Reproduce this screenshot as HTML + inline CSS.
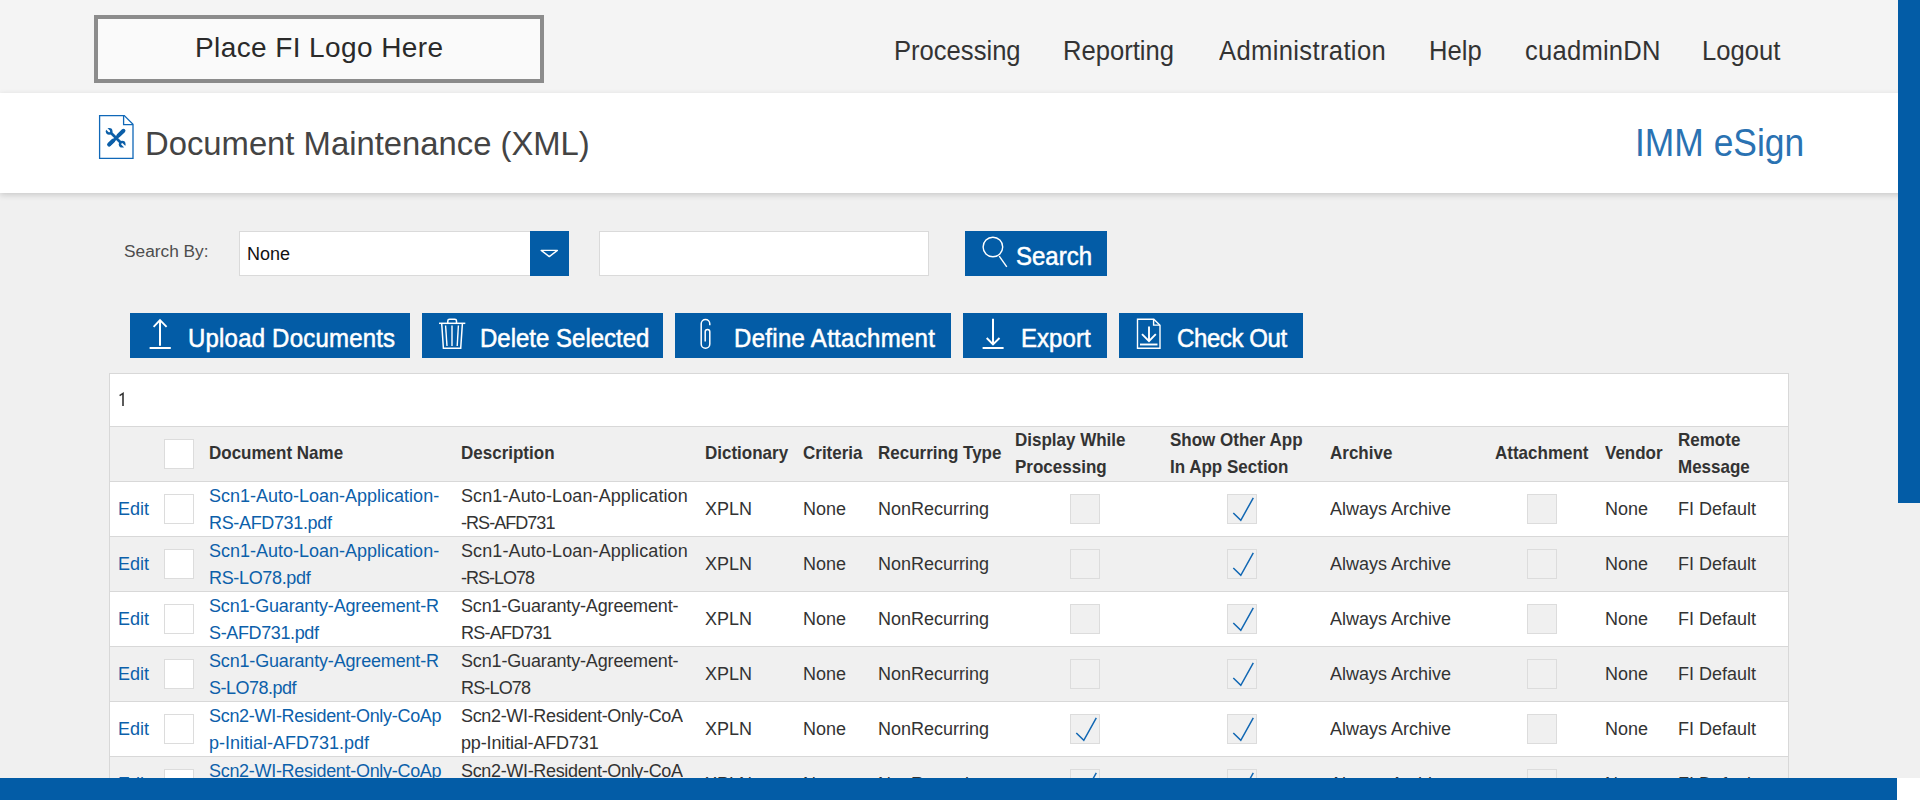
<!DOCTYPE html>
<html><head><meta charset="utf-8"><title>Document Maintenance (XML)</title>
<style>
html,body{margin:0;padding:0;}
body{width:1920px;height:800px;overflow:hidden;position:relative;background:#f0f0f0;font-family:"Liberation Sans",sans-serif;}
.t{position:absolute;white-space:nowrap;}
.b{position:absolute;box-sizing:border-box;}
</style></head><body>
<div class="b" style="left:0;top:0;width:1920px;height:93px;background:#f4f4f4"></div>
<div class="b" style="left:0;top:93px;width:1920px;height:100px;background:#fff;box-shadow:0 2px 6px rgba(0,0,0,0.16)"></div>
<div class="b" style="left:94px;top:15px;width:450px;height:68px;border:4px solid #8c8c8c;background:#fafafa"></div>
<div class="t" style="left:195px;top:33.90px;font-size:28px;line-height:28px;font-weight:400;color:#2a2a2a;letter-spacing:0.4px;">Place FI Logo Here</div>
<div class="t" style="left:894px;top:38.63px;font-size:25.6px;line-height:25.6px;font-weight:400;color:#333;transform:scaleY(1.08);transform-origin:0 21.67px;letter-spacing:0px;">Processing</div>
<div class="t" style="left:1063px;top:38.63px;font-size:25.6px;line-height:25.6px;font-weight:400;color:#333;transform:scaleY(1.08);transform-origin:0 21.67px;letter-spacing:0px;">Reporting</div>
<div class="t" style="left:1219px;top:38.63px;font-size:25.6px;line-height:25.6px;font-weight:400;color:#333;transform:scaleY(1.08);transform-origin:0 21.67px;letter-spacing:0.35px;">Administration</div>
<div class="t" style="left:1429px;top:38.63px;font-size:25.6px;line-height:25.6px;font-weight:400;color:#333;transform:scaleY(1.08);transform-origin:0 21.67px;letter-spacing:0px;">Help</div>
<div class="t" style="left:1525px;top:38.63px;font-size:25.6px;line-height:25.6px;font-weight:400;color:#333;transform:scaleY(1.08);transform-origin:0 21.67px;letter-spacing:0.22px;">cuadminDN</div>
<div class="t" style="left:1702px;top:38.63px;font-size:25.6px;line-height:25.6px;font-weight:400;color:#333;transform:scaleY(1.08);transform-origin:0 21.67px;letter-spacing:0px;">Logout</div>
<svg class="b" style="left:95px;top:110px" width="45" height="52" viewBox="0 0 45 52">
<path d="M4.6 5.6 H29.3 L38 14.3 V48.4 H4.6 Z" fill="#fff" stroke="#1068b8" stroke-width="1.3"/>
<path d="M28.6 5.6 V14.6 H38" fill="none" stroke="#1068b8" stroke-width="1.3"/>
<g transform="translate(21.2 28) scale(0.84) translate(-21.2 -28)">
<g stroke="#0b5ea8" stroke-linecap="round" fill="none">
<path d="M13 36 L29.5 19.8" stroke-width="3.2"/>
<path d="M23.8 25.2 L29.8 19.4" stroke-width="4.8"/>
<path d="M12.8 35.8 L17.8 31" stroke-width="4.8"/>
<path d="M14.5 21.5 L27 34" stroke-width="3.2"/>
</g>
<circle cx="12.8" cy="20" r="4" fill="#0b5ea8"/><circle cx="28.3" cy="35.3" r="4" fill="#0b5ea8"/>
<path d="M9.8 17 L12.8 20" stroke="#fff" stroke-width="2.4" stroke-linecap="round"/>
<path d="M31.3 38.3 L28.3 35.3" stroke="#fff" stroke-width="2.4" stroke-linecap="round"/>
</g>
</svg>
<div class="t" style="left:145px;top:128.03px;font-size:32.8px;line-height:32.8px;font-weight:400;color:#444;transform:scaleY(1.04);transform-origin:0 27.77px;">Document Maintenance (XML)</div>
<div class="t" style="left:1635px;top:127.03px;font-size:35.4px;line-height:35.4px;font-weight:400;color:#2a72b2;transform:scaleY(1.08);transform-origin:0 29.97px;">IMM eSign</div>
<div class="t" style="left:124px;top:243.26px;font-size:17.3px;line-height:17.3px;font-weight:400;color:#4d4d4d;">Search By:</div>
<div class="b" style="left:239px;top:231px;width:330px;height:45px;border:1px solid #dadada;background:#fff"></div>
<div class="t" style="left:247px;top:244.76px;font-size:18px;line-height:18px;font-weight:400;color:#111;">None</div>
<div class="b" style="left:530px;top:231px;width:39px;height:45px;background:#035ca6"></div>
<svg class="b" style="left:530px;top:231px" width="39" height="45"><path d="M11.2 19.4 H27.4 L19.3 25.6 Z" fill="none" stroke="#fff" stroke-width="1.4" stroke-linejoin="round"/></svg>
<div class="b" style="left:599px;top:231px;width:330px;height:45px;border:1px solid #dadada;background:#fff"></div>
<div class="b" style="left:965px;top:231px;width:142px;height:45px;background:#035ca6"></div>
<svg class="b" style="left:965px;top:231px" width="142" height="45"><circle cx="27.9" cy="16" r="9.8" fill="none" stroke="#fff" stroke-width="1.4"/><path d="M34.2 25.1 L41.8 35.8" stroke="#fff" stroke-width="1.4"/></svg>
<div class="t" style="left:1016px;top:244.68px;font-size:24px;line-height:24px;font-weight:400;color:#fff;transform:scaleY(1.04);transform-origin:0 20.32px;-webkit-text-stroke:0.5px #fff;">Search</div>
<div class="b" style="left:130px;top:313px;width:280px;height:45px;background:#035ca6"></div>
<div class="t" style="left:188px;top:326.68px;font-size:24px;line-height:24px;font-weight:400;color:#fff;transform:scaleY(1.05);transform-origin:0 20.32px;-webkit-text-stroke:0.5px #fff;letter-spacing:0.2px;">Upload Documents</div>
<div class="b" style="left:422px;top:313px;width:241px;height:45px;background:#035ca6"></div>
<div class="t" style="left:480px;top:326.68px;font-size:24px;line-height:24px;font-weight:400;color:#fff;transform:scaleY(1.05);transform-origin:0 20.32px;-webkit-text-stroke:0.5px #fff;letter-spacing:0.0px;">Delete Selected</div>
<div class="b" style="left:675px;top:313px;width:276px;height:45px;background:#035ca6"></div>
<div class="t" style="left:734px;top:326.68px;font-size:24px;line-height:24px;font-weight:400;color:#fff;transform:scaleY(1.05);transform-origin:0 20.32px;-webkit-text-stroke:0.5px #fff;letter-spacing:0.3px;">Define Attachment</div>
<div class="b" style="left:963px;top:313px;width:144px;height:45px;background:#035ca6"></div>
<div class="t" style="left:1021px;top:326.68px;font-size:24px;line-height:24px;font-weight:400;color:#fff;transform:scaleY(1.05);transform-origin:0 20.32px;-webkit-text-stroke:0.5px #fff;letter-spacing:0.05px;">Export</div>
<div class="b" style="left:1119px;top:313px;width:184px;height:45px;background:#035ca6"></div>
<div class="t" style="left:1177px;top:326.68px;font-size:24px;line-height:24px;font-weight:400;color:#fff;transform:scaleY(1.05);transform-origin:0 20.32px;-webkit-text-stroke:0.5px #fff;letter-spacing:-0.4px;">Check Out</div>
<svg class="b" style="left:0;top:0" width="1320" height="370" fill="none" stroke="#fff" stroke-width="1.5">
<path d="M160 320.5 V345.8" stroke-width="2"/><path d="M153.6 326.8 L160 320.2 L166.6 326.8" stroke-width="1.9"/><path d="M149.6 348 H170.8" stroke-width="2"/>
<path d="M439 323.3 H465.3"/><path d="M447.8 323.3 V321 Q447.8 319.3 449.5 319.3 H454.8 Q456.5 319.3 456.5 321 V323.3"/>
<path d="M441.7 323.5 L443.4 348.3 H460.7 L462.4 323.5"/>
<path d="M445.6 325.5 L447 346" stroke-width="1.4"/><path d="M452 325.5 V346" stroke-width="1.4"/><path d="M458.4 325.5 L457.2 346" stroke-width="1.4"/>
<path d="M709.8 325.2 V323.8 A4.3 4.3 0 0 0 701.2 323.8 V344 A4.3 4.3 0 0 0 709.8 344 V331.8 A2.3 2.3 0 0 0 705.2 331.8 V341.6"/>
<path d="M993 318.8 V344" stroke-width="2"/><path d="M986.7 338 L993 344.4 L999.5 338" stroke-width="1.9"/><path d="M982.6 348 H1003.6" stroke-width="2"/>
<path d="M1137.5 319.3 H1153.8 L1160 325.3 V348.2 H1137.5 Z" stroke-width="1.4"/><path d="M1153.6 319.5 V325.1 H1160" stroke-width="1.4"/>
<path d="M1149 326.4 V341" stroke-width="1.9"/><path d="M1142 334.2 L1149 341.2 L1155.8 334.2" stroke-width="1.9"/><path d="M1140 344.5 H1157.5" stroke-width="1.9"/>
</svg>
<div class="b" style="left:109px;top:373px;width:1680px;height:420px;border:1px solid #d8d8d8;border-bottom:none;background:#fff"></div>
<svg class="b" style="left:110px;top:385px" width="30" height="30"><path d="M9.6 10.6 L13 8.4 V21" fill="none" stroke="#333" stroke-width="1.6"/></svg>
<div class="b" style="left:109px;top:426px;width:1680px;height:56px;border:1px solid #d8d8d8;border-bottom:1px solid #d8d8d8;background:#f0f0f0"></div>
<div class="b" style="left:164px;top:439px;width:30px;height:30px;border:1px solid #dcdcdc;background:#fff"></div>
<div class="t" style="left:209px;top:444.81px;font-size:17px;line-height:17px;font-weight:700;color:#333333;transform:scaleY(1.07);transform-origin:0 14.39px;">Document Name</div>
<div class="t" style="left:461px;top:444.81px;font-size:17px;line-height:17px;font-weight:700;color:#333333;transform:scaleY(1.07);transform-origin:0 14.39px;">Description</div>
<div class="t" style="left:705px;top:444.81px;font-size:17px;line-height:17px;font-weight:700;color:#333333;transform:scaleY(1.07);transform-origin:0 14.39px;">Dictionary</div>
<div class="t" style="left:803px;top:444.81px;font-size:17px;line-height:17px;font-weight:700;color:#333333;transform:scaleY(1.07);transform-origin:0 14.39px;">Criteria</div>
<div class="t" style="left:878px;top:444.81px;font-size:17px;line-height:17px;font-weight:700;color:#333333;transform:scaleY(1.07);transform-origin:0 14.39px;">Recurring Type</div>
<div class="t" style="left:1330px;top:444.81px;font-size:17px;line-height:17px;font-weight:700;color:#333333;transform:scaleY(1.07);transform-origin:0 14.39px;">Archive</div>
<div class="t" style="left:1495px;top:444.81px;font-size:17px;line-height:17px;font-weight:700;color:#333333;transform:scaleY(1.07);transform-origin:0 14.39px;">Attachment</div>
<div class="t" style="left:1605px;top:444.81px;font-size:17px;line-height:17px;font-weight:700;color:#333333;transform:scaleY(1.07);transform-origin:0 14.39px;">Vendor</div>
<div class="t" style="left:1015px;top:432.21px;font-size:17px;line-height:17px;font-weight:700;color:#333333;transform:scaleY(1.07);transform-origin:0 14.39px;">Display While</div>
<div class="t" style="left:1015px;top:459.31px;font-size:17px;line-height:17px;font-weight:700;color:#333333;transform:scaleY(1.07);transform-origin:0 14.39px;">Processing</div>
<div class="t" style="left:1170px;top:432.21px;font-size:17px;line-height:17px;font-weight:700;color:#333333;transform:scaleY(1.07);transform-origin:0 14.39px;">Show Other App</div>
<div class="t" style="left:1170px;top:459.31px;font-size:17px;line-height:17px;font-weight:700;color:#333333;transform:scaleY(1.07);transform-origin:0 14.39px;">In App Section</div>
<div class="t" style="left:1678px;top:432.21px;font-size:17px;line-height:17px;font-weight:700;color:#333333;transform:scaleY(1.07);transform-origin:0 14.39px;">Remote</div>
<div class="t" style="left:1678px;top:459.31px;font-size:17px;line-height:17px;font-weight:700;color:#333333;transform:scaleY(1.07);transform-origin:0 14.39px;">Message</div>
<div class="b" style="left:109px;top:481px;width:1680px;height:56px;border:1px solid #d8d8d8;border-top:1px solid #d8d8d8;background:#fff"></div>
<div class="t" style="left:118px;top:499.76px;font-size:18px;line-height:18px;font-weight:400;color:#0c60aa;transform:scaleY(1.04);transform-origin:0 15.24px;">Edit</div>
<div class="b" style="left:164px;top:494px;width:30px;height:30px;border:1px solid #dcdcdc;background:#fff"></div>
<div class="t" style="left:209px;top:486.56px;font-size:18px;line-height:18px;font-weight:400;color:#0c60aa;transform:scaleY(1.04);transform-origin:0 15.24px;">Scn1-Auto-Loan-Application-</div>
<div class="t" style="left:209px;top:513.76px;font-size:18px;line-height:18px;font-weight:400;color:#0c60aa;transform:scaleY(1.04);transform-origin:0 15.24px;letter-spacing:-0.342px;">RS-AFD731.pdf</div>
<div class="t" style="left:461px;top:486.56px;font-size:18px;line-height:18px;font-weight:400;color:#333333;transform:scaleY(1.04);transform-origin:0 15.24px;letter-spacing:0.104px;">Scn1-Auto-Loan-Application</div>
<div class="t" style="left:461px;top:513.76px;font-size:18px;line-height:18px;font-weight:400;color:#333333;transform:scaleY(1.04);transform-origin:0 15.24px;letter-spacing:-0.956px;">-RS-AFD731</div>
<div class="t" style="left:705px;top:499.76px;font-size:18px;line-height:18px;font-weight:400;color:#333333;transform:scaleY(1.04);transform-origin:0 15.24px;">XPLN</div>
<div class="t" style="left:803px;top:499.76px;font-size:18px;line-height:18px;font-weight:400;color:#333333;transform:scaleY(1.04);transform-origin:0 15.24px;">None</div>
<div class="t" style="left:878px;top:499.76px;font-size:18px;line-height:18px;font-weight:400;color:#333333;transform:scaleY(1.04);transform-origin:0 15.24px;">NonRecurring</div>
<div class="b" style="left:1070px;top:494px;width:30px;height:30px;border:1px solid #dcdcdc;background:#f0f0f0"></div>
<div class="b" style="left:1227px;top:494px;width:30px;height:30px;border:1px solid #dcdcdc;background:#f0f0f0"></div>
<svg class="b" style="left:1227px;top:494px" width="30" height="30"><path d="M6.3 19 L13.8 26.3 L26.3 3.8" fill="none" stroke="#1167b3" stroke-width="1.5"/></svg>
<div class="t" style="left:1330px;top:499.76px;font-size:18px;line-height:18px;font-weight:400;color:#333333;transform:scaleY(1.04);transform-origin:0 15.24px;">Always Archive</div>
<div class="b" style="left:1527px;top:494px;width:30px;height:30px;border:1px solid #dcdcdc;background:#f0f0f0"></div>
<div class="t" style="left:1605px;top:499.76px;font-size:18px;line-height:18px;font-weight:400;color:#333333;transform:scaleY(1.04);transform-origin:0 15.24px;">None</div>
<div class="t" style="left:1678px;top:499.76px;font-size:18px;line-height:18px;font-weight:400;color:#333333;transform:scaleY(1.04);transform-origin:0 15.24px;">FI Default</div>
<div class="b" style="left:109px;top:536px;width:1680px;height:56px;border:1px solid #d8d8d8;border-top:1px solid #d8d8d8;background:#f0f0f0"></div>
<div class="t" style="left:118px;top:554.76px;font-size:18px;line-height:18px;font-weight:400;color:#0c60aa;transform:scaleY(1.04);transform-origin:0 15.24px;">Edit</div>
<div class="b" style="left:164px;top:549px;width:30px;height:30px;border:1px solid #dcdcdc;background:#fff"></div>
<div class="t" style="left:209px;top:541.56px;font-size:18px;line-height:18px;font-weight:400;color:#0c60aa;transform:scaleY(1.04);transform-origin:0 15.24px;">Scn1-Auto-Loan-Application-</div>
<div class="t" style="left:209px;top:568.76px;font-size:18px;line-height:18px;font-weight:400;color:#0c60aa;transform:scaleY(1.04);transform-origin:0 15.24px;letter-spacing:-0.340px;">RS-LO78.pdf</div>
<div class="t" style="left:461px;top:541.56px;font-size:18px;line-height:18px;font-weight:400;color:#333333;transform:scaleY(1.04);transform-origin:0 15.24px;letter-spacing:0.104px;">Scn1-Auto-Loan-Application</div>
<div class="t" style="left:461px;top:568.76px;font-size:18px;line-height:18px;font-weight:400;color:#333333;transform:scaleY(1.04);transform-origin:0 15.24px;letter-spacing:-1.000px;">-RS-LO78</div>
<div class="t" style="left:705px;top:554.76px;font-size:18px;line-height:18px;font-weight:400;color:#333333;transform:scaleY(1.04);transform-origin:0 15.24px;">XPLN</div>
<div class="t" style="left:803px;top:554.76px;font-size:18px;line-height:18px;font-weight:400;color:#333333;transform:scaleY(1.04);transform-origin:0 15.24px;">None</div>
<div class="t" style="left:878px;top:554.76px;font-size:18px;line-height:18px;font-weight:400;color:#333333;transform:scaleY(1.04);transform-origin:0 15.24px;">NonRecurring</div>
<div class="b" style="left:1070px;top:549px;width:30px;height:30px;border:1px solid #dcdcdc;background:#f0f0f0"></div>
<div class="b" style="left:1227px;top:549px;width:30px;height:30px;border:1px solid #dcdcdc;background:#f0f0f0"></div>
<svg class="b" style="left:1227px;top:549px" width="30" height="30"><path d="M6.3 19 L13.8 26.3 L26.3 3.8" fill="none" stroke="#1167b3" stroke-width="1.5"/></svg>
<div class="t" style="left:1330px;top:554.76px;font-size:18px;line-height:18px;font-weight:400;color:#333333;transform:scaleY(1.04);transform-origin:0 15.24px;">Always Archive</div>
<div class="b" style="left:1527px;top:549px;width:30px;height:30px;border:1px solid #dcdcdc;background:#f0f0f0"></div>
<div class="t" style="left:1605px;top:554.76px;font-size:18px;line-height:18px;font-weight:400;color:#333333;transform:scaleY(1.04);transform-origin:0 15.24px;">None</div>
<div class="t" style="left:1678px;top:554.76px;font-size:18px;line-height:18px;font-weight:400;color:#333333;transform:scaleY(1.04);transform-origin:0 15.24px;">FI Default</div>
<div class="b" style="left:109px;top:591px;width:1680px;height:56px;border:1px solid #d8d8d8;border-top:1px solid #d8d8d8;background:#fff"></div>
<div class="t" style="left:118px;top:609.76px;font-size:18px;line-height:18px;font-weight:400;color:#0c60aa;transform:scaleY(1.04);transform-origin:0 15.24px;">Edit</div>
<div class="b" style="left:164px;top:604px;width:30px;height:30px;border:1px solid #dcdcdc;background:#fff"></div>
<div class="t" style="left:209px;top:596.56px;font-size:18px;line-height:18px;font-weight:400;color:#0c60aa;transform:scaleY(1.04);transform-origin:0 15.24px;letter-spacing:-0.171px;">Scn1-Guaranty-Agreement-R</div>
<div class="t" style="left:209px;top:623.76px;font-size:18px;line-height:18px;font-weight:400;color:#0c60aa;transform:scaleY(1.04);transform-origin:0 15.24px;letter-spacing:-0.373px;">S-AFD731.pdf</div>
<div class="t" style="left:461px;top:596.56px;font-size:18px;line-height:18px;font-weight:400;color:#333333;transform:scaleY(1.04);transform-origin:0 15.24px;letter-spacing:-0.157px;">Scn1-Guaranty-Agreement-</div>
<div class="t" style="left:461px;top:623.76px;font-size:18px;line-height:18px;font-weight:400;color:#333333;transform:scaleY(1.04);transform-origin:0 15.24px;letter-spacing:-0.750px;">RS-AFD731</div>
<div class="t" style="left:705px;top:609.76px;font-size:18px;line-height:18px;font-weight:400;color:#333333;transform:scaleY(1.04);transform-origin:0 15.24px;">XPLN</div>
<div class="t" style="left:803px;top:609.76px;font-size:18px;line-height:18px;font-weight:400;color:#333333;transform:scaleY(1.04);transform-origin:0 15.24px;">None</div>
<div class="t" style="left:878px;top:609.76px;font-size:18px;line-height:18px;font-weight:400;color:#333333;transform:scaleY(1.04);transform-origin:0 15.24px;">NonRecurring</div>
<div class="b" style="left:1070px;top:604px;width:30px;height:30px;border:1px solid #dcdcdc;background:#f0f0f0"></div>
<div class="b" style="left:1227px;top:604px;width:30px;height:30px;border:1px solid #dcdcdc;background:#f0f0f0"></div>
<svg class="b" style="left:1227px;top:604px" width="30" height="30"><path d="M6.3 19 L13.8 26.3 L26.3 3.8" fill="none" stroke="#1167b3" stroke-width="1.5"/></svg>
<div class="t" style="left:1330px;top:609.76px;font-size:18px;line-height:18px;font-weight:400;color:#333333;transform:scaleY(1.04);transform-origin:0 15.24px;">Always Archive</div>
<div class="b" style="left:1527px;top:604px;width:30px;height:30px;border:1px solid #dcdcdc;background:#f0f0f0"></div>
<div class="t" style="left:1605px;top:609.76px;font-size:18px;line-height:18px;font-weight:400;color:#333333;transform:scaleY(1.04);transform-origin:0 15.24px;">None</div>
<div class="t" style="left:1678px;top:609.76px;font-size:18px;line-height:18px;font-weight:400;color:#333333;transform:scaleY(1.04);transform-origin:0 15.24px;">FI Default</div>
<div class="b" style="left:109px;top:646px;width:1680px;height:56px;border:1px solid #d8d8d8;border-top:1px solid #d8d8d8;background:#f0f0f0"></div>
<div class="t" style="left:118px;top:664.76px;font-size:18px;line-height:18px;font-weight:400;color:#0c60aa;transform:scaleY(1.04);transform-origin:0 15.24px;">Edit</div>
<div class="b" style="left:164px;top:659px;width:30px;height:30px;border:1px solid #dcdcdc;background:#fff"></div>
<div class="t" style="left:209px;top:651.56px;font-size:18px;line-height:18px;font-weight:400;color:#0c60aa;transform:scaleY(1.04);transform-origin:0 15.24px;letter-spacing:-0.171px;">Scn1-Guaranty-Agreement-R</div>
<div class="t" style="left:209px;top:678.76px;font-size:18px;line-height:18px;font-weight:400;color:#0c60aa;transform:scaleY(1.04);transform-origin:0 15.24px;letter-spacing:-0.500px;">S-LO78.pdf</div>
<div class="t" style="left:461px;top:651.56px;font-size:18px;line-height:18px;font-weight:400;color:#333333;transform:scaleY(1.04);transform-origin:0 15.24px;letter-spacing:-0.157px;">Scn1-Guaranty-Agreement-</div>
<div class="t" style="left:461px;top:678.76px;font-size:18px;line-height:18px;font-weight:400;color:#333333;transform:scaleY(1.04);transform-origin:0 15.24px;letter-spacing:-0.833px;">RS-LO78</div>
<div class="t" style="left:705px;top:664.76px;font-size:18px;line-height:18px;font-weight:400;color:#333333;transform:scaleY(1.04);transform-origin:0 15.24px;">XPLN</div>
<div class="t" style="left:803px;top:664.76px;font-size:18px;line-height:18px;font-weight:400;color:#333333;transform:scaleY(1.04);transform-origin:0 15.24px;">None</div>
<div class="t" style="left:878px;top:664.76px;font-size:18px;line-height:18px;font-weight:400;color:#333333;transform:scaleY(1.04);transform-origin:0 15.24px;">NonRecurring</div>
<div class="b" style="left:1070px;top:659px;width:30px;height:30px;border:1px solid #dcdcdc;background:#f0f0f0"></div>
<div class="b" style="left:1227px;top:659px;width:30px;height:30px;border:1px solid #dcdcdc;background:#f0f0f0"></div>
<svg class="b" style="left:1227px;top:659px" width="30" height="30"><path d="M6.3 19 L13.8 26.3 L26.3 3.8" fill="none" stroke="#1167b3" stroke-width="1.5"/></svg>
<div class="t" style="left:1330px;top:664.76px;font-size:18px;line-height:18px;font-weight:400;color:#333333;transform:scaleY(1.04);transform-origin:0 15.24px;">Always Archive</div>
<div class="b" style="left:1527px;top:659px;width:30px;height:30px;border:1px solid #dcdcdc;background:#f0f0f0"></div>
<div class="t" style="left:1605px;top:664.76px;font-size:18px;line-height:18px;font-weight:400;color:#333333;transform:scaleY(1.04);transform-origin:0 15.24px;">None</div>
<div class="t" style="left:1678px;top:664.76px;font-size:18px;line-height:18px;font-weight:400;color:#333333;transform:scaleY(1.04);transform-origin:0 15.24px;">FI Default</div>
<div class="b" style="left:109px;top:701px;width:1680px;height:56px;border:1px solid #d8d8d8;border-top:1px solid #d8d8d8;background:#fff"></div>
<div class="t" style="left:118px;top:719.76px;font-size:18px;line-height:18px;font-weight:400;color:#0c60aa;transform:scaleY(1.04);transform-origin:0 15.24px;">Edit</div>
<div class="b" style="left:164px;top:714px;width:30px;height:30px;border:1px solid #dcdcdc;background:#fff"></div>
<div class="t" style="left:209px;top:706.56px;font-size:18px;line-height:18px;font-weight:400;color:#0c60aa;transform:scaleY(1.04);transform-origin:0 15.24px;letter-spacing:-0.300px;">Scn2-WI-Resident-Only-CoAp</div>
<div class="t" style="left:209px;top:733.76px;font-size:18px;line-height:18px;font-weight:400;color:#0c60aa;transform:scaleY(1.04);transform-origin:0 15.24px;">p-Initial-AFD731.pdf</div>
<div class="t" style="left:461px;top:706.56px;font-size:18px;line-height:18px;font-weight:400;color:#333333;transform:scaleY(1.04);transform-origin:0 15.24px;letter-spacing:-0.337px;">Scn2-WI-Resident-Only-CoA</div>
<div class="t" style="left:461px;top:733.76px;font-size:18px;line-height:18px;font-weight:400;color:#333333;transform:scaleY(1.04);transform-origin:0 15.24px;letter-spacing:-0.150px;">pp-Initial-AFD731</div>
<div class="t" style="left:705px;top:719.76px;font-size:18px;line-height:18px;font-weight:400;color:#333333;transform:scaleY(1.04);transform-origin:0 15.24px;">XPLN</div>
<div class="t" style="left:803px;top:719.76px;font-size:18px;line-height:18px;font-weight:400;color:#333333;transform:scaleY(1.04);transform-origin:0 15.24px;">None</div>
<div class="t" style="left:878px;top:719.76px;font-size:18px;line-height:18px;font-weight:400;color:#333333;transform:scaleY(1.04);transform-origin:0 15.24px;">NonRecurring</div>
<div class="b" style="left:1070px;top:714px;width:30px;height:30px;border:1px solid #dcdcdc;background:#f0f0f0"></div>
<svg class="b" style="left:1070px;top:714px" width="30" height="30"><path d="M6.3 19 L13.8 26.3 L26.3 3.8" fill="none" stroke="#1167b3" stroke-width="1.5"/></svg>
<div class="b" style="left:1227px;top:714px;width:30px;height:30px;border:1px solid #dcdcdc;background:#f0f0f0"></div>
<svg class="b" style="left:1227px;top:714px" width="30" height="30"><path d="M6.3 19 L13.8 26.3 L26.3 3.8" fill="none" stroke="#1167b3" stroke-width="1.5"/></svg>
<div class="t" style="left:1330px;top:719.76px;font-size:18px;line-height:18px;font-weight:400;color:#333333;transform:scaleY(1.04);transform-origin:0 15.24px;">Always Archive</div>
<div class="b" style="left:1527px;top:714px;width:30px;height:30px;border:1px solid #dcdcdc;background:#f0f0f0"></div>
<div class="t" style="left:1605px;top:719.76px;font-size:18px;line-height:18px;font-weight:400;color:#333333;transform:scaleY(1.04);transform-origin:0 15.24px;">None</div>
<div class="t" style="left:1678px;top:719.76px;font-size:18px;line-height:18px;font-weight:400;color:#333333;transform:scaleY(1.04);transform-origin:0 15.24px;">FI Default</div>
<div class="b" style="left:109px;top:756px;width:1680px;height:56px;border:1px solid #d8d8d8;border-top:1px solid #d8d8d8;background:#f0f0f0"></div>
<div class="t" style="left:118px;top:774.76px;font-size:18px;line-height:18px;font-weight:400;color:#0c60aa;transform:scaleY(1.04);transform-origin:0 15.24px;">Edit</div>
<div class="b" style="left:164px;top:769px;width:30px;height:30px;border:1px solid #dcdcdc;background:#fff"></div>
<div class="t" style="left:209px;top:761.56px;font-size:18px;line-height:18px;font-weight:400;color:#0c60aa;transform:scaleY(1.04);transform-origin:0 15.24px;letter-spacing:-0.300px;">Scn2-WI-Resident-Only-CoAp</div>
<div class="t" style="left:209px;top:788.76px;font-size:18px;line-height:18px;font-weight:400;color:#0c60aa;transform:scaleY(1.04);transform-origin:0 15.24px;">p-Initial-LO78.pdf</div>
<div class="t" style="left:461px;top:761.56px;font-size:18px;line-height:18px;font-weight:400;color:#333333;transform:scaleY(1.04);transform-origin:0 15.24px;letter-spacing:-0.337px;">Scn2-WI-Resident-Only-CoA</div>
<div class="t" style="left:461px;top:788.76px;font-size:18px;line-height:18px;font-weight:400;color:#333333;transform:scaleY(1.04);transform-origin:0 15.24px;">pp-Initial-LO78</div>
<div class="t" style="left:705px;top:774.76px;font-size:18px;line-height:18px;font-weight:400;color:#333333;transform:scaleY(1.04);transform-origin:0 15.24px;">XPLN</div>
<div class="t" style="left:803px;top:774.76px;font-size:18px;line-height:18px;font-weight:400;color:#333333;transform:scaleY(1.04);transform-origin:0 15.24px;">None</div>
<div class="t" style="left:878px;top:774.76px;font-size:18px;line-height:18px;font-weight:400;color:#333333;transform:scaleY(1.04);transform-origin:0 15.24px;">NonRecurring</div>
<div class="b" style="left:1070px;top:769px;width:30px;height:30px;border:1px solid #dcdcdc;background:#f0f0f0"></div>
<svg class="b" style="left:1070px;top:769px" width="30" height="30"><path d="M6.3 19 L13.8 26.3 L26.3 3.8" fill="none" stroke="#1167b3" stroke-width="1.5"/></svg>
<div class="b" style="left:1227px;top:769px;width:30px;height:30px;border:1px solid #dcdcdc;background:#f0f0f0"></div>
<svg class="b" style="left:1227px;top:769px" width="30" height="30"><path d="M6.3 19 L13.8 26.3 L26.3 3.8" fill="none" stroke="#1167b3" stroke-width="1.5"/></svg>
<div class="t" style="left:1330px;top:774.76px;font-size:18px;line-height:18px;font-weight:400;color:#333333;transform:scaleY(1.04);transform-origin:0 15.24px;">Always Archive</div>
<div class="b" style="left:1527px;top:769px;width:30px;height:30px;border:1px solid #dcdcdc;background:#f0f0f0"></div>
<div class="t" style="left:1605px;top:774.76px;font-size:18px;line-height:18px;font-weight:400;color:#333333;transform:scaleY(1.04);transform-origin:0 15.24px;">None</div>
<div class="t" style="left:1678px;top:774.76px;font-size:18px;line-height:18px;font-weight:400;color:#333333;transform:scaleY(1.04);transform-origin:0 15.24px;">FI Default</div>
<div class="b" style="left:1898px;top:0;width:22px;height:778px;background:#f0f0f0"></div>
<div class="b" style="left:1898px;top:0;width:22px;height:503px;background:#035ca6"></div>
<div class="b" style="left:0;top:778px;width:1898px;height:22px;background:#035ca6"></div>
<div class="b" style="left:1897px;top:778px;width:23px;height:22px;background:#fff"></div>
</body></html>
